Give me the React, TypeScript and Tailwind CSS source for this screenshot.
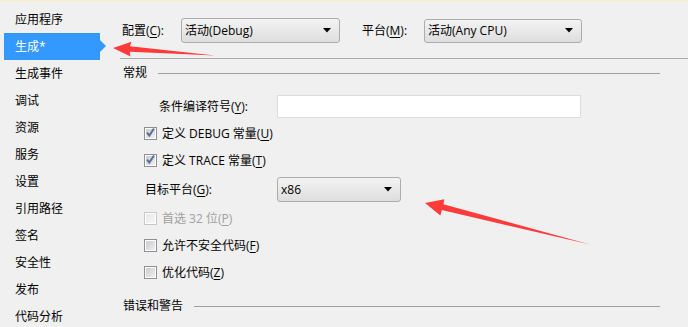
import React from 'react'

const font = "[font-family:'Open_Sans','Noto_Sans_CJK_SC',sans-serif]"

function Key({ children }: { children: React.ReactNode }) {
  return <span className="underline underline-offset-2">{children}</span>
}

function Combo({ text, className }: { text: string; className: string }) {
  return (
    <div
      className={`flex items-center justify-between rounded-[3px] border border-[#acacac] bg-gradient-to-b from-[#f3f3f3] to-[#dedede] pl-[3px] pr-[8px] text-[12px] text-black ${className}`}
    >
      <span>{text}</span>
      <svg width="8" height="5" viewBox="0 0 8 5">
        <polygon points="0,0 8,0 4,4.5" fill="#000" />
      </svg>
    </div>
  )
}

function Check({ checked, disabled }: { checked?: boolean; disabled?: boolean }) {
  return (
    <div
      className={`flex h-[13px] w-[13px] items-center justify-center border bg-white ${
        disabled ? 'border-[#c8c8c8]' : 'border-[#8e8f8f]'
      }`}
    >
      <div
        className={`relative h-[9px] w-[9px] bg-gradient-to-br ${
          disabled ? 'from-[#e8e8e8] to-[#f6f6f6]' : 'from-[#c9ccd1] to-[#eeeeee]'
        }`}
      >
        {checked && (
          <svg className="absolute -left-px -top-[2px]" width="11" height="11" viewBox="0 0 11 11">
            <path d="M2 5.5 L4.3 8.5 L9 1.5" stroke="#5a6d97" strokeWidth="2" fill="none" />
          </svg>
        )}
      </div>
    </div>
  )
}

function CheckRow({
  label,
  checked,
  disabled,
}: {
  label: React.ReactNode
  checked?: boolean
  disabled?: boolean
}) {
  return (
    <div className="flex h-[27px] items-center pl-[24px]">
      <Check checked={checked} disabled={disabled} />
      <span className={`ml-[5px] text-[12px] ${disabled ? 'text-[#a0a0a0]' : 'text-black'}`}>
        {label}
      </span>
    </div>
  )
}

const navItems = [
  '应用程序',
  '生成*',
  '生成事件',
  '调试',
  '资源',
  '服务',
  '设置',
  '引用路径',
  '签名',
  '安全性',
  '发布',
  '代码分析',
]

export default function App() {
  return (
    <div className={`relative h-[327px] w-[688px] overflow-hidden bg-[#f0f0f0] ${font}`}>
      <div className="h-px bg-[#fbefc2]" />
      <div className="flex">
        {/* left nav */}
        <ul className="w-[120px] shrink-0 pt-[5px]">
          {navItems.map((item, i) => (
            <li
              key={item}
              className={`relative ml-[4px] flex h-[27px] w-[96px] items-center pl-[11px] text-[12px] ${
                i === 1 ? 'bg-[#3399ff] text-white' : 'text-black'
              }`}
            >
              {item}
              {i === 1 && (
                <span className="absolute left-full top-[7px] h-0 w-0 border-y-[6.5px] border-l-[6px] border-y-transparent border-l-[#3399ff]" />
              )}
            </li>
          ))}
        </ul>

        {/* settings */}
        <div className="flex-1 pt-[17px] text-[12px] text-black">
          <div className="flex items-center pl-[2px]">
            <span className="w-[59px]">
              配置(<Key>C</Key>):
            </span>
            <Combo text="活动(Debug)" className="h-[25px] w-[159px]" />
            <span className="ml-[22px] w-[62px]">
              平台(<Key>M</Key>):
            </span>
            <Combo text="活动(Any CPU)" className="h-[24px] w-[158px]" />
          </div>

          <div className="mt-[15px] h-px bg-[#a9a9a9]" />

          <div className="mt-[6px] flex h-[16px] items-center pl-[3px] pr-[28px]">
            <span>常规</span>
            <div className="ml-[11px] h-px flex-1 bg-[#a0a0a0]" />
          </div>

          <div className="mt-[14px] flex h-[23px] items-center pl-[39px]">
            <span className="w-[118px]">
              条件编译符号(<Key>Y</Key>):
            </span>
            <div className="h-[23px] w-[304px] border border-[#dcdcdc] bg-white" />
          </div>

          <div className="mt-[2px]">
            <CheckRow
              checked
              label={
                <>
                  定义 DEBUG 常量(<Key>U</Key>)
                </>
              }
            />
            <CheckRow
              checked
              label={
                <>
                  定义 TRACE 常量(<Key>T</Key>)
                </>
              }
            />
          </div>

          <div className="mt-[3px] flex h-[25px] items-center pl-[25px]">
            <span className="w-[132px]">
              目标平台(<Key>G</Key>):
            </span>
            <Combo text="x86" className="h-[25px] w-[124px]" />
          </div>

          <div className="mt-[3px]">
            <CheckRow
              disabled
              label={
                <>
                  首选 32 位(<Key>P</Key>)
                </>
              }
            />
            <CheckRow
              label={
                <>
                  允许不安全代码(<Key>F</Key>)
                </>
              }
            />
            <CheckRow
              label={
                <>
                  优化代码(<Key>Z</Key>)
                </>
              }
            />
          </div>

          <div className="mt-[12px] flex h-[16px] items-center pl-[3px] pr-[28px]">
            <span>错误和警告</span>
            <div className="ml-[11px] h-px flex-1 bg-[#a0a0a0]" />
          </div>
        </div>
      </div>

      {/* annotation arrows */}
      <svg className="pointer-events-none absolute left-0 top-0" width="688" height="327">
        <polygon
          points="113,48 131.5,41.8 130,46.2 215,55.5 129.8,51.8 130.5,56.5"
          fill="#fe3b3b"
        />
        <polygon
          points="425,203 444.4,199.3 443.4,204.3 590,244.5 441.8,210 440.4,215.4"
          fill="#fe3b3b"
        />
      </svg>
    </div>
  )
}
